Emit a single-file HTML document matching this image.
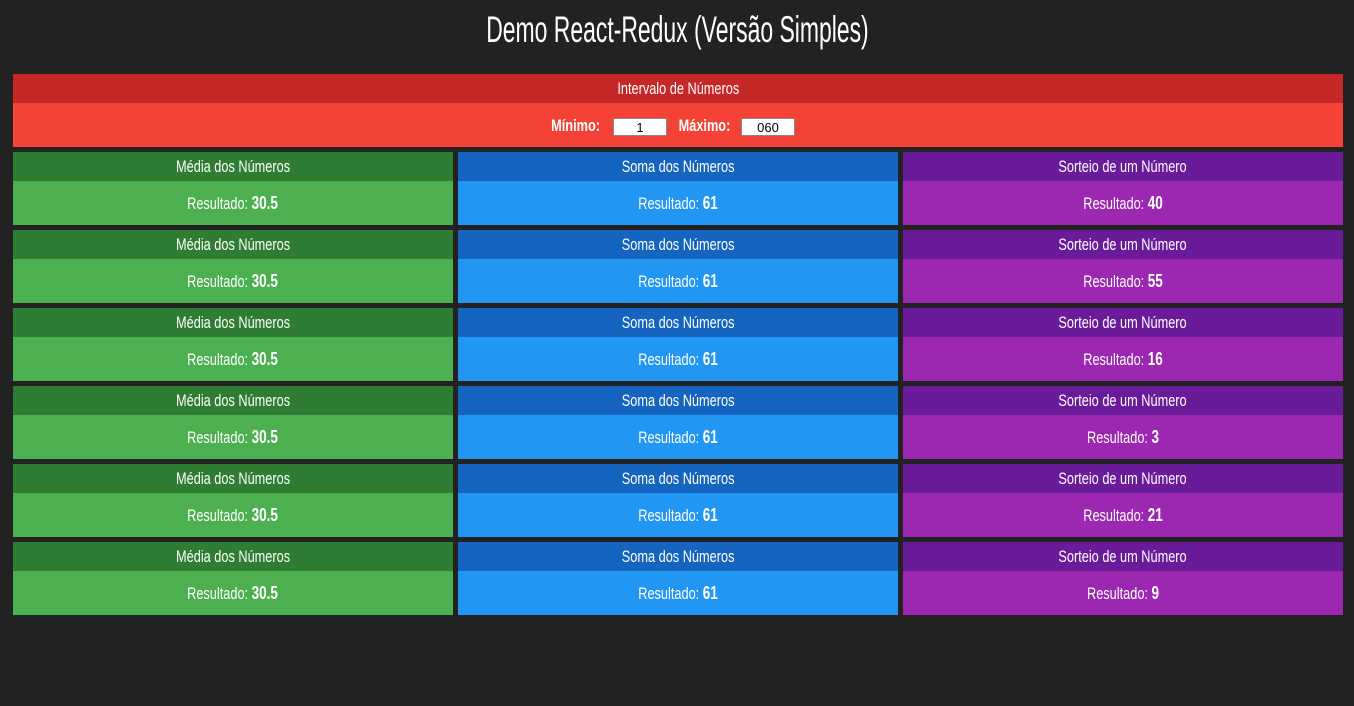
<!DOCTYPE html>
<html><head><meta charset="utf-8"><style>
body{margin:0;background:#222;width:1354px;height:706px;overflow:hidden;font-family:"Liberation Sans",sans-serif;color:#fff}
h1{margin:0;position:absolute;top:8px;left:0;width:1354px;text-align:center;font-weight:normal;font-size:37px;line-height:44px;}
h1 span{display:inline-block;transform:scaleX(0.62)}
.box{position:absolute;}
.hd{height:29px;line-height:30px;text-align:center;font-size:17px}
.bd{text-align:center;font-size:17px}
.s{display:inline-block;transform:scaleX(0.75);white-space:nowrap}
.bd b{font-size:18px}
.ab{position:absolute;top:0;height:44px;line-height:46px;text-align:center;width:100px}
input{position:absolute;top:15px;width:52px;height:16px;border:1px solid #888;font:13px "Liberation Sans",sans-serif;text-align:center;padding:0;margin:0;box-sizing:content-box}
</style></head><body>
<h1><span>Demo React-Redux (Versão Simples)</span></h1>
<div class="box" style="left:13px;top:74px;width:1330px">
<div class="hd" style="background:#c62828"><span class="s">Intervalo de Números</span></div>
<div class="bd" style="background:#f44336;height:44px;position:relative">
<div class="ab" style="left:513px"><span class="s"><b style="font-size:17px">Mínimo:</b></span></div>
<input value="1" style="left:600px">
<div class="ab" style="left:641px"><span class="s"><b style="font-size:17px">Máximo:</b></span></div>
<input value="060" style="left:728px">
</div>
</div>
<div id="g"></div>
<script>
var r=[40,55,16,3,21,9],h='';
function c(x,t,a,b,hd,v){return '<div class="box" style="left:'+x+'px;top:'+t+'px;width:440px"><div class="hd" style="background:'+a+'"><span class="s">'+hd+'</span></div><div class="bd" style="background:'+b+';height:44px;line-height:44px"><span class="s">Resultado: <b>'+v+'</b></span></div></div>';}
for(var i=0;i<6;i++){var t=152+78*i;
h+=c(13,t,'#2e7d32','#4caf50','Média dos Números','30.5');
h+=c(458,t,'#1565c0','#2196f3','Soma dos Números','61');
h+=c(903,t,'#6a1b9a','#9c27b0','Sorteio de um Número',r[i]);}
document.getElementById('g').innerHTML=h;
</script>
</body></html>
